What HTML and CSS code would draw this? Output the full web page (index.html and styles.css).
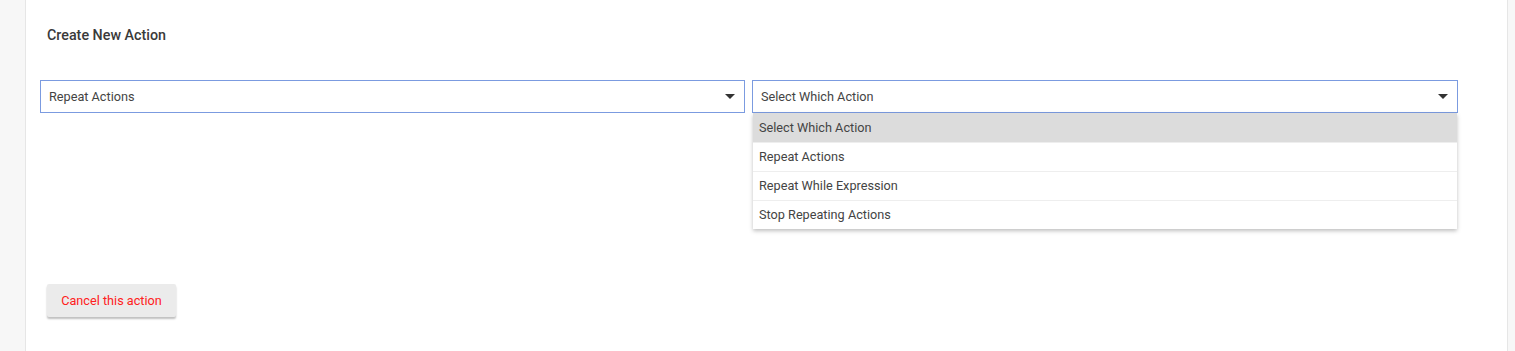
FILE: index.html
```html
<!doctype html>
<html lang="en">
	<head>
		<meta charset="utf-8">
		<title>Create New Action</title>
		<link rel="stylesheet" href="styles.css">
	</head>
	<body>
		<div class="panel">
			<h3 class="title">Create New Action</h3>
			<div class="row">
				<div class="select">
					<span>Repeat Actions</span>
					<i class="caret"></i>
				</div>
				<div class="select open">
					<span>Select Which Action</span>
					<i class="caret"></i>
					<ul class="menu">
						<li class="active">Select Which Action</li>
						<li>Repeat Actions</li>
						<li>Repeat While Expression</li>
						<li>Stop Repeating Actions</li>
					</ul>
				</div>
			</div>
			<button class="cancel">Cancel this action</button>
		</div>
	</body>
</html>
```

FILE: styles.css
```css
html, body {
	margin: 0;
	height: 100%;
}

body {
	background: #f7f7f7;
	font-family: Roboto, "Liberation Sans", sans-serif;
	color: #333;
	overflow: hidden;
}

.panel {
	margin-left: 25px;
	width: 1483px;
	height: 100%;
	box-sizing: border-box;
	background: #fff;
	border-left: 1px solid #e6e6e6;
	border-right: 1px solid #e6e6e6;
	padding: 27px 0 0 14px;
}

.title {
	margin: 0 0 0 7px;
	font-size: 14.3px;
	font-weight: 500;
	color: #3a3a3a;
	line-height: 16px;
}

.row {
	display: flex;
	gap: 7px;
	margin-top: 37px;
}

.select {
	position: relative;
	box-sizing: border-box;
	width: 705px;
	height: 33px;
	border: 1px solid #7b9be0;
	display: flex;
	align-items: center;
	justify-content: space-between;
	padding: 0 9px 0 8px;
	font-size: 12.7px;
	color: #444;
}

.select + .select {
	width: 706px;
}

.caret {
	width: 0;
	height: 0;
	border-left: 5px solid transparent;
	border-right: 5px solid transparent;
	border-top: 5px solid #333;
}

.menu {
	position: absolute;
	top: 32px;
	left: 0;
	right: 0;
	margin: 0;
	padding: 0;
	list-style: none;
	background: #fff;
	box-shadow: 0 2px 4px rgba(0,0,0,0.25);
	z-index: 2;
}

.menu li {
	box-sizing: border-box;
	height: 29px;
	line-height: 28px;
	padding-left: 6px;
	border-top: 1px solid #eee;
	font-size: 12.7px;
	color: #444;
}

.menu li:first-child {
	border-top: 0;
	line-height: 29px;
}

.menu li.active {
	background: #dcdcdc;
}

.cancel {
	margin: 171px 0 0 7px;
	width: 129px;
	height: 33px;
	border: 0;
	border-radius: 2px;
	background: #ebebeb;
	color: #ff2020;
	font-family: inherit;
	font-size: 12.7px;
	box-shadow: 0 2px 2px rgba(0,0,0,0.25);
}
```
